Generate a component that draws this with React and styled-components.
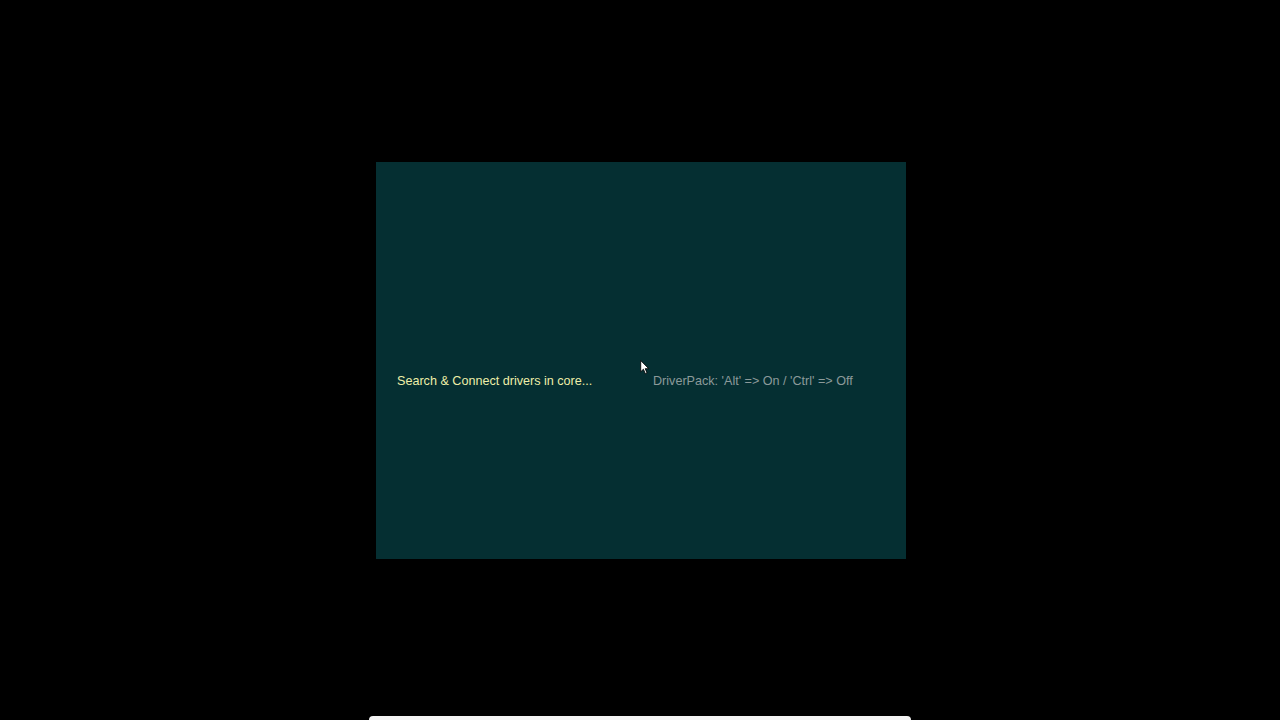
import React from 'react';
import styled, { createGlobalStyle } from 'styled-components';

const Global = createGlobalStyle`
  html, body { margin: 0; padding: 0; background: #000; }
  body { font-family: "Liberation Sans", Arial, sans-serif; overflow: hidden; }
`;

const Screen = styled.div`
  width: 1280px;
  height: 720px;
  display: flex;
  flex-direction: column;
  background: #000;
`;

const Stage = styled.div`
  flex: 1;
  padding-top: 162px;
  padding-left: 376px;
`;

const Panel = styled.div`
  position: relative;
  width: 530px;
  height: 397px;
  background: #052f32;
  box-sizing: border-box;
  padding: 212px 0 0 21px;
`;

const StatusRow = styled.div`
  display: grid;
  grid-template-columns: 256px auto;
  font-size: 12.6px;
  line-height: 14px;
`;

const Status = styled.span`
  color: ${p => (p.$muted ? '#8c9a9a' : '#eeeea8')};
  white-space: nowrap;
`;

const Cursor = styled.svg`
  position: absolute;
  left: 264px;
  top: 198px;
`;

const BottomBar = styled.div`
  align-self: center;
  width: 542px;
  height: 4px;
  background: #f4f4f4;
  border-radius: 6px 6px 0 0;
`;

export default function App() {
  return (
    <Screen>
      <Global />
      <Stage>
        <Panel>
          <StatusRow>
            <Status>Search &amp; Connect drivers in core...</Status>
            <Status $muted>DriverPack: 'Alt' =&gt; On / 'Ctrl' =&gt; Off</Status>
          </StatusRow>
          <Cursor width="10" height="15" viewBox="0 0 9 14">
            <path d="M0.5 0.5 L0.5 11 L3 8.6 L4.8 12.8 L6.4 12.1 L4.7 8.1 L8 8.1 Z" fill="#fff" stroke="#000" strokeWidth="0.8" />
          </Cursor>
        </Panel>
      </Stage>
      <BottomBar />
    </Screen>
  );
}
